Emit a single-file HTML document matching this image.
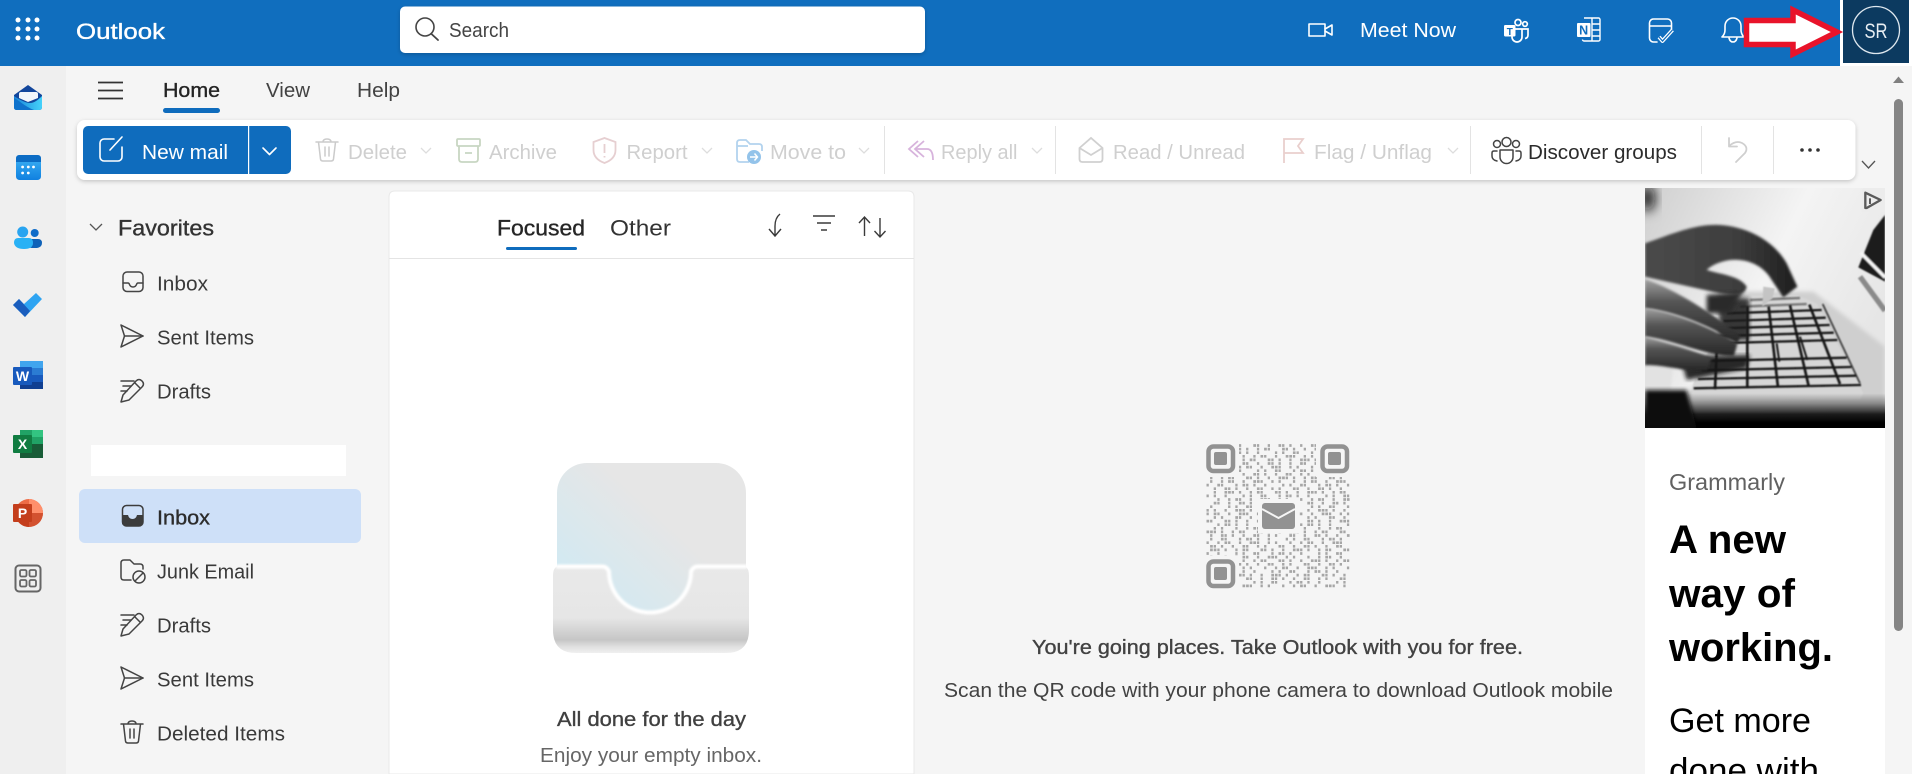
<!DOCTYPE html>
<html lang="en"><head><meta charset="utf-8"><title>Outlook</title>
<style>
html,body{margin:0;padding:0;background:#fff;width:1920px;height:774px;overflow:hidden}
svg{display:block;position:absolute;left:0;top:0}
text{font-family:"Liberation Sans",sans-serif;fill:#333}
.sb{stroke:currentColor;stroke-width:.35}
.tb{font-size:20.5px}
.off{fill:#cfcfcf}
.nav{font-size:20px;fill:#3a3a3a}
.ic{fill:none;stroke:#444;stroke-width:1.5;stroke-linecap:round;stroke-linejoin:round}
.wi{fill:none;stroke:#fff;stroke-width:1.6;stroke-linecap:round;stroke-linejoin:round}
.ch{fill:none;stroke:#ddd;stroke-width:1.3}
.q path{stroke:#a6a6a6;stroke-width:2.7;fill:none}
.a{stroke-dasharray:2.8 8 6.4 8 2.8 4.4 2.8 11.6 6.4 8 2.8 8 6.4 4.4 2.8 8}
.b{stroke-dasharray:6.4 4.4 2.8 8 2.8 8 10 4.4 2.8 8 2.8 4.4 6.4 11.6}
.c{stroke-dasharray:2.8 4.4 2.8 8 6.4 11.6 2.8 4.4 6.4 4.4 2.8 8 2.8 15.2}
.d{stroke-dasharray:10 8 2.8 4.4 2.8 11.6 2.8 8 2.8 4.4 6.4 8 2.8 8}
</style></head><body>
<svg width="1920" height="774" viewBox="0 0 1920 774" xmlns="http://www.w3.org/2000/svg">
<defs>
<linearGradient id="bk" x1="0" y1="1" x2="1" y2="0"><stop offset=".1" stop-color="#cdeaf5"/><stop offset=".62" stop-color="#e6e6e6"/></linearGradient>
<linearGradient id="tr" x1="0" y1="0" x2="0" y2="1"><stop offset="0" stop-color="#e9e9e9"/><stop offset=".6" stop-color="#e6e6e6"/><stop offset=".85" stop-color="#c6c6c6"/><stop offset=".93" stop-color="#e0e0e0"/><stop offset="1" stop-color="#f0f0f0"/></linearGradient>
<linearGradient id="ml" x1="0" y1="0" x2="1" y2="0"><stop offset="0" stop-color="#1a86d8"/><stop offset="1" stop-color="#45d2fb"/></linearGradient>
<linearGradient id="cal" x1="0" y1="0" x2="0" y2="1"><stop offset="0" stop-color="#40b5f5"/><stop offset="1" stop-color="#1080e0"/></linearGradient>
<linearGradient id="ph" x1="0" y1="0" x2="1" y2=".5"><stop offset="0" stop-color="#cfcfcf"/><stop offset=".55" stop-color="#f4f4f4"/><stop offset="1" stop-color="#e6e6e6"/></linearGradient>
<linearGradient id="bt" x1="0" y1="0" x2="0" y2="1"><stop offset="0" stop-color="#000" stop-opacity="0"/><stop offset=".3" stop-color="#000" stop-opacity=".35"/><stop offset=".6" stop-color="#000" stop-opacity=".88"/><stop offset=".85" stop-color="#000"/></linearGradient>
<linearGradient id="hd" x1="0" y1="0" x2="1" y2="0"><stop offset="0" stop-color="#4a4a4a"/><stop offset=".6" stop-color="#3e3e3e"/><stop offset="1" stop-color="#1e1e1e"/></linearGradient>
<linearGradient id="f1" x1="0" y1="0" x2="0" y2="1"><stop offset="0" stop-color="#a0a0a0"/><stop offset=".35" stop-color="#555"/><stop offset="1" stop-color="#262626"/></linearGradient>
<filter id="b3"><feGaussianBlur stdDeviation="1"/></filter>
<filter id="p1"><feGaussianBlur stdDeviation="6"/></filter>
<filter id="p2" x="-50%" y="-50%" width="200%" height="200%"><feGaussianBlur stdDeviation="18"/></filter>
<filter id="p3"><feGaussianBlur stdDeviation="2.500"/></filter>
<filter id="p4"><feGaussianBlur stdDeviation="4"/></filter>
<filter id="sh" x="-5%" y="-30%" width="110%" height="160%"><feDropShadow dx="0" dy="1.5" stdDeviation="2" flood-color="#000" flood-opacity=".2"/></filter>
<clipPath id="pc"><rect x="15" y="24" width="720" height="720"/></clipPath>
<pattern id="qp" width="3.6" height="3.6" patternUnits="userSpaceOnUse" x="1205.600"><rect width=".9" height="3.6" fill="#f5f5f5"/></pattern>
<g id="i-sent" class="ic"><path d="M1 1 23 12 1 23 4.5 12Z"/><path d="M4.5 12H23"/></g>
<g id="i-draft" class="ic"><path d="M1 3h13M3 8h8M1 13h6"/><path d="M1 24l2-7L16 3q3-3 6 0t0 6L9 22Z"/><path d="M15 5l5 5"/></g>
<g id="i-inbox" class="ic"><rect x="1" y="1" width="20" height="19.500" rx="4"/><path d="M1 12h5q1 0 1.500 1.500 1 2.500 3.500 2.500t3.500-2.500Q15 12 16 12h5"/></g>
<g id="i-trash" class="ic"><path d="M1 4h22M8 4q0-3 4-3t4 3M3.500 4l2 17q.3 2 2.500 2h8q2.200 0 2.500-2l2-17M10 9v9M14 9v9"/></g>
</defs>

<!-- page -->
<rect width="1920" height="774" fill="#f5f5f5"/>
<rect x="1912" width="8" height="774" fill="#fff"/>
<rect width="66" y="66" height="708" fill="#efefef"/>

<!-- header -->
<rect width="1840" height="66" fill="#106ebe"/>
<rect x="1840" width="80" height="66" fill="#fff"/>
<rect x="1843" width="66" height="63" fill="#0c3a60"/>
<g fill="#fff"><circle cx="18" cy="20" r="2.500"/><circle cx="28" cy="20" r="2.500"/><circle cx="37" cy="20" r="2.500"/><circle cx="18" cy="29" r="2.500"/><circle cx="28" cy="29" r="2.500"/><circle cx="37" cy="29" r="2.500"/><circle cx="18" cy="38" r="2.500"/><circle cx="28" cy="38" r="2.500"/><circle cx="37" cy="38" r="2.500"/></g>
<text x="76" y="39" font-size="22" textLength="89" lengthAdjust="spacingAndGlyphs" class="sb" style="fill:#fff;color:#fff">Outlook</text>
<rect x="400" y="6.500" width="525" height="46.500" rx="5" fill="#fff" filter="url(#sh)"/>
<circle cx="425" cy="27" r="9" fill="none" stroke="#444" stroke-width="1.600"/><path d="M431.500 34 438 40" stroke="#444" stroke-width="1.800" stroke-linecap="round"/>
<text x="449" y="37" font-size="20" textLength="60" lengthAdjust="spacingAndGlyphs" style="fill:#444">Search</text>

<g class="wi"><rect x="1309" y="24" width="16" height="12"/><path d="M1325 29l7-4v10l-7-4"/></g>
<text x="1360" y="37" font-size="20.500" textLength="96" lengthAdjust="spacingAndGlyphs" style="fill:#fff">Meet Now</text>
<!-- teams -->
<g><circle cx="1518" cy="22.500" r="3" fill="none" stroke="#fff" stroke-width="1.700"/><circle cx="1525" cy="24" r="2.300" fill="none" stroke="#fff" stroke-width="1.700"/><path d="M1512 29h10v8a5 5 0 0 1-10 0ZM1522 29h6v6q0 3-3 3.500" fill="none" stroke="#fff" stroke-width="1.700"/><rect x="1504" y="25" width="11.500" height="11.500" rx="1.200" fill="#fff"/><text x="1509.800" y="35" font-size="10" font-weight="700" text-anchor="middle" style="fill:#106ebe">T</text></g>
<!-- onenote -->
<g><path d="M1584 18h14.500a1.500 1.500 0 0 1 1.500 1.500v20a1.500 1.500 0 0 1-1.500 1.500h-14.500a1.500 1.500 0 0 1-1.500-1.500M1592 18v23M1592 24h8M1592 30h8M1592 36h8" fill="none" stroke="#fff" stroke-width="1.400"/><rect x="1577" y="23" width="13.500" height="14" fill="#fff" rx="1"/><text x="1583.700" y="34.500" font-size="12.500" font-weight="700" text-anchor="middle" style="fill:#106ebe">N</text></g>
<!-- todo -->
<g class="wi" stroke-width="1.500"><path d="M1657 42h-3.500a4 4 0 0 1-4-4V23a4 4 0 0 1 4-4h14a4 4 0 0 1 4 4v8M1649.500 26h22"/></g>
<path d="M1659 37l3.500 4 10-11" fill="none" stroke="#fff" stroke-width="3.800" stroke-linejoin="round"/><path d="M1659 37l3.500 4 10-11" fill="none" stroke="#106ebe" stroke-width="1.300"/>
<!-- bell -->
<g class="wi"><path d="M1722 37q3-3 3-7v-4a8 8 0 0 1 16 0v4q0 3 2 6l1 1Z"/><path d="M1729 38q1 4 4 4t4-4"/></g>
<!-- arrow -->
<polygon points="1746.500,20.500 1793,20.500 1793,10 1837,32 1793,54 1793,44.500 1746.500,44.500" fill="#fff" stroke="#e8132a" stroke-width="5.500" stroke-linejoin="miter"/>
<circle cx="1876" cy="30" r="23.500" fill="none" stroke="#dfe8ef" stroke-width="1.300"/>
<text x="1876" y="38" font-size="21" text-anchor="middle" textLength="23" lengthAdjust="spacingAndGlyphs" style="fill:#e8eef3">SR</text>

<!-- rail -->
<g>
<path d="M28 85 42 95V107q0 3-3 3H17q-3 0-3-3V95Z" fill="#12469c"/>
<path d="M19 94q0-2 2-2H36q2 0 2 2v4l-10 4-9-4Z" fill="#f2f6fb"/>
<path d="M14 96 C20 100 26 103 30 103 C34 103 38 100 42 96V107q0 3-3 3H17q-3 0-3-3Z" fill="url(#ml)"/>
<path d="M14 98C20 101 24 106 34 110H17q-3 0-3-3Z" fill="#0f72cc"/>
<rect x="16" y="155" width="25" height="25" rx="3.500" fill="url(#cal)"/><path d="M16 162v-3.500q0-3.500 3.500-3.500h18q3.500 0 3.500 3.500V162Z" fill="#0c6cc4"/>
<g fill="#fff"><circle cx="22.600" cy="167" r="1.400"/><circle cx="28.300" cy="167" r="1.400"/><circle cx="33.500" cy="167" r="1.400"/><circle cx="22.600" cy="173" r="1.400"/><circle cx="28.300" cy="173" r="1.400"/></g>
<circle cx="34.700" cy="233" r="4" fill="#0f6cc9"/><path d="M27 243q0-4 4-4h7q4 0 4 4t-5 5H32q-5 0-5-5Z" fill="#0f62b8"/>
<circle cx="22.700" cy="232" r="5.500" fill="#29a4f0"/><path d="M14 243q0-5 4-5h11q4 0 4 5 0 6-9 6t-10-6Z" fill="#29b1f5"/>
<path d="M13 305 19 299 24 304 36 293 42 299 25 317 Z" fill="#2ea4f2"/><path d="M13 305 19 299 30 311 25 317Z" fill="#1a5dbd"/>
<!-- word -->
<rect x="20" y="361" width="23" height="7" fill="#41a5ee"/><rect x="20" y="368" width="23" height="7" fill="#2b7cd3"/><rect x="20" y="375" width="23" height="7" fill="#185abd"/><rect x="20" y="382" width="23" height="7" fill="#103f91"/>
<rect x="13" y="367" width="19" height="18" rx="1" fill="#185abd"/><text x="22.500" y="381" font-size="14" font-weight="700" text-anchor="middle" style="fill:#fff">W</text>
<!-- excel -->
<rect x="20" y="430" width="12" height="7" fill="#21a366"/><rect x="32" y="430" width="11" height="7" fill="#33c481"/><rect x="20" y="437" width="23" height="7" fill="#107c41"/><rect x="32" y="437" width="11" height="7" fill="#21a366"/><rect x="20" y="444" width="23" height="14" fill="#185c37"/>
<rect x="13" y="435" width="19" height="18" rx="1" fill="#107c41"/><text x="22.500" y="449" font-size="14" font-weight="700" text-anchor="middle" style="fill:#fff">X</text>
<!-- ppt -->
<circle cx="29" cy="513" r="14" fill="#ed6c47"/><path d="M29 499a14 14 0 0 1 14 14H29Z" fill="#ff8f6b"/><path d="M29 513h14a14 14 0 0 1-14 14Z" fill="#d35230"/><path d="M29 527a14 14 0 0 1-12-7l12-7Z" fill="#c43e1c"/>
<rect x="13" y="504" width="19" height="18" rx="1" fill="#c43e1c"/><text x="22.500" y="518" font-size="14" font-weight="700" text-anchor="middle" style="fill:#fff">P</text>
<!-- apps -->
<rect x="15.500" y="565.500" width="25" height="26" rx="3.500" fill="none" stroke="#666" stroke-width="2"/><g fill="none" stroke="#666" stroke-width="1.800"><rect x="20" y="570" width="6.500" height="6.500" rx="1.500"/><rect x="29.500" y="570" width="6.500" height="6.500" rx="1.500"/><rect x="20" y="580" width="6.500" height="6.500" rx="1.500"/><rect x="29.500" y="580" width="6.500" height="6.500" rx="1.500"/></g>
</g>

<!-- tabs -->
<path d="M98 82.500h25M98 90.500h25M98 98.500h25" stroke="#333" stroke-width="1.700"/>
<text x="163" y="97" font-size="20.500" textLength="57" lengthAdjust="spacingAndGlyphs" class="sb" style="fill:#242424;color:#242424">Home</text>
<rect x="163" y="108" width="57" height="5" rx="2.500" fill="#0f6cbd"/>
<text x="266" y="97" font-size="20.500" textLength="44" lengthAdjust="spacingAndGlyphs" style="fill:#424242">View</text>
<text x="357" y="97" font-size="20.500" textLength="43" lengthAdjust="spacingAndGlyphs" style="fill:#424242">Help</text>

<!-- toolbar -->
<rect x="77" y="120" width="1778.500" height="60" rx="8" fill="#fff" filter="url(#sh)"/>
<rect x="83" y="126" width="208" height="48" rx="5" fill="#0f6cbd"/>
<rect x="248" y="126" width="1.200" height="48" fill="#fff"/>
<g class="wi"><path d="M114 139h-10a4 4 0 0 0-4 4v14a4 4 0 0 0 4 4h14a4 4 0 0 0 4-4v-10"/><path d="M110 150l12-13"/></g>
<text x="142" y="159" font-size="20.500" textLength="86" lengthAdjust="spacingAndGlyphs" style="fill:#fff">New mail</text>
<path d="M263 148l6.500 6.500 6.500-6.500" class="wi"/>

<use href="#i-trash" x="315" y="138" style="opacity:.28"/>
<text x="348" y="159" class="tb off" textLength="59" lengthAdjust="spacingAndGlyphs">Delete</text><path d="M421 148l5 5 5-5" class="ch"/>
<g fill="none" stroke="#c8d6c2" stroke-width="1.800"><rect x="457" y="139" width="23" height="7" rx="1"/><path d="M459 146v13q0 3 3 3h13q3 0 3-3v-13M465 153h7"/></g>
<text x="489" y="159" class="tb off" textLength="68" lengthAdjust="spacingAndGlyphs">Archive</text>
<g fill="none" stroke="#e6cfd1" stroke-width="1.800"><path d="M604.500 138l11 4v8q0 9-11 13-11-4-11-13v-8Z"/><path d="M604.500 144v9M604.500 156v1.500"/></g>
<text x="626.500" y="159" class="tb off" textLength="61" lengthAdjust="spacingAndGlyphs">Report</text><path d="M702 148l5 5 5-5" class="ch"/>
<g fill="none" stroke="#b3d3ee" stroke-width="1.800"><path d="M749 162h-9q-3 0-3-3v-16q0-3 3-3h6l4 4h9q3 0 3 3v4"/><path d="M737 146h11"/></g><circle cx="754" cy="157" r="7" fill="#93c3ea"/><path d="M750 157h7M754.500 153.500l3 3.500-3 3.500" fill="none" stroke="#fff" stroke-width="1.500"/>
<text x="770" y="159" class="tb off" textLength="76" lengthAdjust="spacingAndGlyphs">Move to</text><path d="M859 148l5 5 5-5" class="ch"/>
<rect x="884" y="126" width="1" height="48" fill="#e3e3e3"/>
<g fill="none" stroke="#d7b3dc" stroke-width="1.800"><path d="M918 141l-9 8 9 8M924 141l-9 8 9 8"/><path d="M915 149h12q6 0 6 11"/></g>
<text x="941" y="159" class="tb off" textLength="76.500" lengthAdjust="spacingAndGlyphs">Reply all</text><path d="M1032 148l5 5 5-5" class="ch"/>
<rect x="1055" y="126" width="1" height="48" fill="#e3e3e3"/>
<g fill="none" stroke="#d0d0d0" stroke-width="1.800"><path d="M1079.500 148l11.500-10 11.500 10v11q0 3-3 3h-17q-3 0-3-3Z"/><path d="M1079.500 148l11.500 7 11.500-7"/></g>
<text x="1113" y="159" class="tb off" textLength="132" lengthAdjust="spacingAndGlyphs">Read / Unread</text>
<path d="M1284 163v-24h19l-5 7 5 7h-19" fill="none" stroke="#e9cfcd" stroke-width="1.800"/>
<text x="1314" y="159" class="tb off" textLength="118" lengthAdjust="spacingAndGlyphs">Flag / Unflag</text><path d="M1448 148l5 5 5-5" class="ch"/>
<rect x="1470" y="126" width="1" height="48" fill="#e3e3e3"/>
<g class="ic" stroke-width="1.300"><circle cx="1506.500" cy="142" r="4.500"/><circle cx="1497" cy="144" r="3.500"/><circle cx="1516" cy="144" r="3.500"/><path d="M1500 150h13v7a6.500 6.500 0 0 1-13 0ZM1497 151h-3q-2 0-2 2v3q0 4 5 5M1516 151h3q2 0 2 2v3q0 4-5 5"/></g>
<text x="1528" y="159" class="tb" textLength="149" lengthAdjust="spacingAndGlyphs" style="fill:#2b2b2b">Discover groups</text>
<rect x="1701" y="126" width="1" height="48" fill="#e3e3e3"/>
<path d="M1729 138v8.500h8M1729 146q7-6 13-3 7 4 3 10l-9 9" fill="none" stroke="#cfcfcf" stroke-width="1.800" stroke-linecap="round" stroke-linejoin="round"/>
<rect x="1773" y="126" width="1" height="48" fill="#e3e3e3"/>
<g fill="#333"><circle cx="1802" cy="150" r="1.800"/><circle cx="1810" cy="150" r="1.800"/><circle cx="1818" cy="150" r="1.800"/></g>
<path d="M1862 161l6.500 7 6.500-7" fill="none" stroke="#555" stroke-width="1.300"/>

<!-- folder pane -->
<path d="M90 224l6 6 6-6" fill="none" stroke="#555" stroke-width="1.300"/>
<text x="118" y="235.500" font-size="22.500" textLength="96" lengthAdjust="spacingAndGlyphs" class="sb" style="fill:#333;color:#333">Favorites</text>
<use href="#i-inbox" x="122" y="271"/><text x="157" y="290.500" class="nav" textLength="51" lengthAdjust="spacingAndGlyphs">Inbox</text>
<use href="#i-sent" x="120" y="324"/><text x="157" y="344.500" class="nav" textLength="97" lengthAdjust="spacingAndGlyphs">Sent Items</text>
<use href="#i-draft" x="120" y="378"/><text x="157" y="398.500" class="nav" textLength="54" lengthAdjust="spacingAndGlyphs">Drafts</text>
<rect x="91" y="445" width="255" height="31" fill="#fff"/>
<rect x="79" y="489" width="282" height="54" rx="6" fill="#cee0f8"/>
<rect x="122.500" y="505.500" width="20.500" height="20.500" rx="4" fill="#cee0f8" stroke="#3c3c3c" stroke-width="1.500"/><path d="M122 515h6q1 4 4.500 4t4.500-4h6v7q0 4-4 4h-13q-4 0-4-4Z" fill="#3c3c3c"/>
<text x="157" y="524.500" class="nav sb" textLength="53" lengthAdjust="spacingAndGlyphs" style="fill:#2c2c2c;color:#2c2c2c">Inbox</text>
<g class="ic"><path d="M131 580h-7q-3 0-3-3v-14q0-3 3-3h6l4 4h6q3 0 3 3v2"/><circle cx="139" cy="577" r="6"/><path d="M135 581l8-8"/></g>
<text x="157" y="578.500" class="nav" textLength="97" lengthAdjust="spacingAndGlyphs">Junk Email</text>
<use href="#i-draft" x="120" y="612"/><text x="157" y="632.500" class="nav" textLength="54" lengthAdjust="spacingAndGlyphs">Drafts</text>
<use href="#i-sent" x="120" y="666"/><text x="157" y="686.500" class="nav" textLength="97" lengthAdjust="spacingAndGlyphs">Sent Items</text>
<use href="#i-trash" x="120" y="720"/><text x="157" y="740.500" class="nav" textLength="128" lengthAdjust="spacingAndGlyphs">Deleted Items</text>

<!-- message list -->
<path d="M389 774V197q0-6 6-6H908q6 0 6 6V774Z" fill="#fff" stroke="#e9e9e9" stroke-width="1"/>
<rect x="389" y="258" width="525" height="1" fill="#e4e4e4"/>
<text x="497" y="235.500" font-size="22.500" textLength="88" lengthAdjust="spacingAndGlyphs" class="sb" style="fill:#262626;color:#262626">Focused</text>
<rect x="506" y="247" width="71" height="3" rx="1.500" fill="#0f6cbd"/>
<text x="610" y="235.500" font-size="22.500" textLength="61" lengthAdjust="spacingAndGlyphs" style="fill:#333">Other</text>
<g fill="none" stroke="#3a3a3a" stroke-width="1.400"><path d="M780 214q-5 4-5 12v9M769 229l6 7 6-7"/><path d="M813 216h22M817 223h14M821 230h6"/><path d="M864.500 236V218M859 223l5.500-6 5.500 6M880 218v18M874.500 231l5.500 6 5.500-6"/></g>

<rect x="557" y="463" width="189" height="175" rx="30" fill="url(#bk)"/>
<path d="M553 575q0-10 10-10H602q5 0 6 5A42 42 0 0 0 692 570q1-5 6-5H739q10 0 10 10V630q0 23-23 23H576q-23 0-23-23Z" fill="url(#tr)"/>
<path d="M556 566.500H602q5 0 7 5A41 41 0 0 0 691 571.500q2-5 7-5H747" fill="none" stroke="#fff" stroke-width="4" filter="url(#b3)"/>
<path d="M554.500 578V628" stroke="#cbcbcb" stroke-width="3" filter="url(#b3)"/><path d="M747.500 578V628" stroke="#d6d6d6" stroke-width="3" filter="url(#b3)"/>
<text x="557" y="726" font-size="20.500" textLength="189" lengthAdjust="spacingAndGlyphs" class="sb" style="fill:#404040;color:#404040">All done for the day</text>
<text x="540" y="762" font-size="20.500" textLength="222" lengthAdjust="spacingAndGlyphs" style="fill:#666">Enjoy your empty inbox.</text>

<!-- QR -->
<g class="q">
<path class="a" d="M1206 445.500H1350"/><path class="b" d="M1206 449.100H1350" style="stroke-dashoffset:7.200"/><path class="c" d="M1206 452.700H1350" style="stroke-dashoffset:14.400"/><path class="d" d="M1206 456.300H1350" style="stroke-dashoffset:3.600"/><path class="b" d="M1206 459.900H1350" style="stroke-dashoffset:21.600"/><path class="a" d="M1206 463.500H1350" style="stroke-dashoffset:10.800"/><path class="d" d="M1206 467.100H1350" style="stroke-dashoffset:18"/><path class="c" d="M1206 470.700H1350" style="stroke-dashoffset:32.400"/><path class="a" d="M1206 474.300H1350" style="stroke-dashoffset:25.200"/><path class="b" d="M1206 477.900H1350" style="stroke-dashoffset:43.200"/><path class="d" d="M1206 481.500H1350" style="stroke-dashoffset:36"/><path class="c" d="M1206 485.100H1350" style="stroke-dashoffset:7.200"/><path class="a" d="M1206 488.700H1350" style="stroke-dashoffset:54"/><path class="b" d="M1206 492.300H1350" style="stroke-dashoffset:14.400"/><path class="c" d="M1206 495.900H1350" style="stroke-dashoffset:46.800"/><path class="d" d="M1206 499.500H1350" style="stroke-dashoffset:28.800"/><path class="a" d="M1206 503.100H1350" style="stroke-dashoffset:39.600"/><path class="c" d="M1206 506.700H1350" style="stroke-dashoffset:61.200"/><path class="b" d="M1206 510.300H1350" style="stroke-dashoffset:3.600"/><path class="d" d="M1206 513.900H1350" style="stroke-dashoffset:50.400"/><path class="a" d="M1206 517.500H1350" style="stroke-dashoffset:18"/><path class="b" d="M1206 521.100H1350" style="stroke-dashoffset:64.800"/><path class="c" d="M1206 524.700H1350" style="stroke-dashoffset:25.200"/><path class="d" d="M1206 528.300H1350" style="stroke-dashoffset:10.800"/><path class="b" d="M1206 531.900H1350" style="stroke-dashoffset:32.400"/><path class="a" d="M1206 535.500H1350" style="stroke-dashoffset:57.600"/><path class="c" d="M1206 539.100H1350" style="stroke-dashoffset:3.600"/><path class="d" d="M1206 542.700H1350" style="stroke-dashoffset:39.600"/><path class="a" d="M1206 546.300H1350" style="stroke-dashoffset:68.400"/><path class="b" d="M1206 549.900H1350" style="stroke-dashoffset:28.800"/><path class="c" d="M1206 553.500H1350" style="stroke-dashoffset:54"/><path class="d" d="M1206 557.100H1350" style="stroke-dashoffset:21.600"/><path class="b" d="M1206 560.700H1350" style="stroke-dashoffset:10.800"/><path class="a" d="M1206 564.300H1350" style="stroke-dashoffset:43.200"/><path class="d" d="M1206 567.900H1350" style="stroke-dashoffset:64.800"/><path class="c" d="M1206 571.500H1350" style="stroke-dashoffset:18"/><path class="b" d="M1206 575.100H1350" style="stroke-dashoffset:50.400"/><path class="a" d="M1206 578.700H1350" style="stroke-dashoffset:7.200"/><path class="c" d="M1206 582.300H1350" style="stroke-dashoffset:36"/><path class="d" d="M1206 585.900H1350" style="stroke-dashoffset:46.800"/>
</g>
<rect x="1205" y="443" width="146" height="146" fill="url(#qp)"/>
<g fill="#f5f5f5"><rect x="1204" y="442" width="35" height="35"/><rect x="1316" y="442" width="36" height="35"/><rect x="1204" y="556" width="35" height="34"/><rect x="1258" y="499" width="41" height="34"/></g>
<g fill="none" stroke="#929292" stroke-width="4.500"><rect x="1208.500" y="446.500" width="24.500" height="24.500" rx="5"/><rect x="1322.500" y="446.500" width="24.500" height="24.500" rx="5"/><rect x="1208.500" y="561.500" width="24.500" height="24.500" rx="5"/></g>
<g fill="#929292"><rect x="1214" y="452" width="13" height="13" rx="2"/><rect x="1328" y="452" width="13" height="13" rx="2"/><rect x="1214" y="567" width="13" height="13" rx="2"/><rect x="1262" y="503" width="33" height="26" rx="3"/></g>
<path d="M1262 509 1278.500 518 1295 509" fill="none" stroke="#f5f5f5" stroke-width="2"/>
<text x="1032" y="654" font-size="20" textLength="491" lengthAdjust="spacingAndGlyphs" class="sb" style="fill:#424242;color:#424242">You're going places. Take Outlook with you for free.</text>
<text x="944" y="697" font-size="20" textLength="669" lengthAdjust="spacingAndGlyphs" style="fill:#424242">Scan the QR code with your phone camera to download Outlook mobile</text>

<!-- ad -->
<rect x="1645" y="428" width="240" height="346" fill="#fff"/>
<g transform="translate(1640 180) scale(.33333)">
<g clip-path="url(#pc)">
<rect x="15" y="24" width="720" height="720" fill="url(#ph)"/>
<ellipse cx="22" cy="55" rx="22" ry="38" fill="#111" filter="url(#p2)"/>
<!-- laptop screen -->
<g filter="url(#p3)">
<path d="M735 105 700 150 655 262 735 305Z" fill="#1a1a1a"/>
<path d="M662 218 735 292" stroke="#f4f4f4" stroke-width="10" fill="none"/>
<path d="M660 290 735 392" stroke="#8a8a8a" stroke-width="16" fill="none"/>
</g>
<!-- laptop deck and keyboard -->
<path d="M300 335H520L735 500V690H100L170 610Z" fill="#cfcfcf" filter="url(#p1)"/>
<path d="M270 380 330 345H470L530 370 670 640 660 658 150 665 160 610Z" fill="#d6d6d6" filter="url(#p3)"/>
<g filter="url(#p3)" fill="none" stroke="#141414" stroke-width="7">
<g opacity=".5"><path d="M300 380 500 372M330 360 480 354"/></g>
<path d="M261 400 545 390M251 423 557 413M241 445 569 435M231 468 581 458M221 490 592 480"/>
<path d="M198 543 620 533M185 571 634 561M174 597 648 587M161 625 663 615"/>
<path d="M322 380 322 625M386 380 414 622M450 376 506 618M508 374 600 612" stroke-width="8"/>
<path d="M548 372 660 610" stroke-width="5" opacity=".8"/>
<path d="M232 470 225 628" stroke-width="8"/>
<path d="M410 490 418 545M480 470 502 540" stroke-width="6"/>
</g>
<path d="M235 355H328V480L240 480Z" fill="#1c1c1c" opacity=".85" filter="url(#p1)"/>
<path d="M120 530 330 525 320 565 140 600Z" fill="#141414" opacity=".9" filter="url(#p1)"/>
<!-- lower area -->
<rect x="15" y="640" width="720" height="104" fill="url(#bt)"/>
<path d="M15 555H100L92 630 15 650Z" fill="#e2e2e2" filter="url(#p4)"/>
<path d="M15 630H140L170 744H15Z" fill="#0d0d0d" filter="url(#p1)"/>
<!-- hands -->
<path d="M15 190C100 160 170 130 240 135C320 140 400 180 440 250L472 320 430 352 395 300C370 255 320 235 270 240C235 245 212 258 200 270C250 285 300 288 320 320C315 350 280 345 240 340L15 290Z" fill="url(#hd)" filter="url(#p4)"/>
<path d="M200 345 310 335 270 400H200Z" fill="#2a2a2a" filter="url(#p1)"/>
<path d="M370 320l35 5-8 30-30 25Z" fill="#c4c4c4" filter="url(#p3)"/>
<path d="M15 298C90 320 220 400 302 468L292 490C200 430 90 392 15 385Z" fill="url(#f1)" filter="url(#p4)"/>
<path d="M15 385C100 395 230 450 292 492L282 528C200 530 90 475 15 470Z" fill="url(#f1)" filter="url(#p4)"/>
<path d="M15 470C80 490 160 510 215 535L200 572C130 575 60 552 15 556Z" fill="url(#f1)" filter="url(#p4)"/>
</g>
<!-- adchoices -->
<path d="M665 95V35q0-11 11-11H735V95Z" fill="#ececec"/>
<path d="M676 38 722 60 680 84 676 84Z" fill="none" stroke="#5a5a5a" stroke-width="7" stroke-linejoin="round"/><path d="M690 55V72" stroke="#5a5a5a" stroke-width="6"/>
</g>
<text x="1669" y="490" font-size="23" textLength="116" lengthAdjust="spacingAndGlyphs" style="fill:#616161">Grammarly</text>
<g font-size="40" font-weight="700">
<text x="1669" y="553" textLength="117" lengthAdjust="spacingAndGlyphs" style="fill:#000">A new</text>
<text x="1669" y="607" textLength="126" lengthAdjust="spacingAndGlyphs" style="fill:#000">way of</text>
<text x="1669" y="661" textLength="164" lengthAdjust="spacingAndGlyphs" style="fill:#000">working.</text>
</g>
<text x="1669" y="732" font-size="34" textLength="142" lengthAdjust="spacingAndGlyphs" style="fill:#000">Get more</text>
<text x="1669" y="782" font-size="34" textLength="150" lengthAdjust="spacingAndGlyphs" style="fill:#000">done with</text>

<!-- scrollbar -->
<path d="M1893 83l5.500-6.500 5.500 6.500Z" fill="#808080"/>
<rect x="1894" y="99" width="9" height="532" rx="4.500" fill="#858585"/>
</svg>
</body></html>
